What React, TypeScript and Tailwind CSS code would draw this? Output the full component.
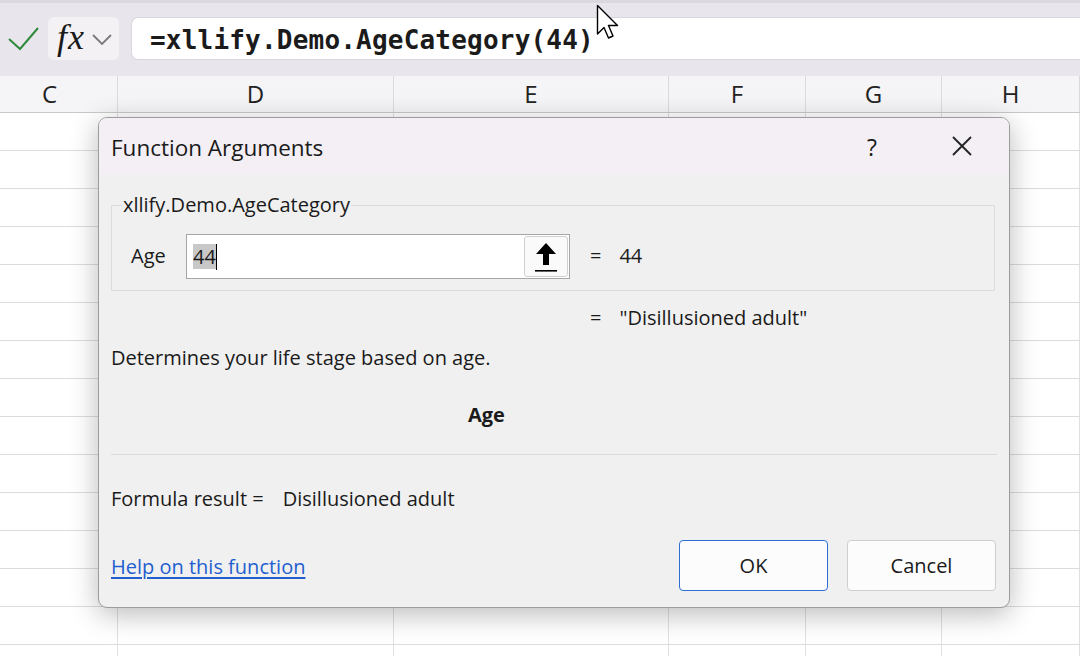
import React from 'react';

const UI_FONT = "font-['Segoe_UI','Open_Sans','Noto_Sans',sans-serif]";

const columns = [
  { key: 'C', width: 118 },
  { key: 'D', width: 276 },
  { key: 'E', width: 275 },
  { key: 'F', width: 137 },
  { key: 'G', width: 136 },
  { key: 'H', width: 138 },
];

const rows = Array.from({ length: 15 }, (_, i) => i);

const FormulaBar: React.FC = () => (
  <div className="h-[76px] bg-[#e9e5ec] border-t-[3px] border-[#dcd8df] pt-[14px]">
    <div className="flex h-[43px] items-stretch">
      <div className="w-[46px] flex items-center justify-center">
        <svg width="34" height="28" viewBox="0 0 34 28">
          <polyline points="3,14 14,24 32,3" fill="none" stroke="#2f8a3c" strokeWidth="2" />
        </svg>
      </div>
      <div className="w-[71px] ml-[2px] rounded-[6px] bg-[#f3f1f4] flex items-center pl-[9px] gap-[6px]">
        <span className="font-['Liberation_Serif',serif] italic text-[36px] leading-none text-[#1a1a1a] -mt-[3px] tracking-[1px]">fx</span>
        <svg width="22" height="14" viewBox="0 0 22 14">
          <polyline points="2,3 11,12 20,3" fill="none" stroke="#7a7a7a" strokeWidth="1.8" />
        </svg>
      </div>
      <div className="flex-1 ml-[12px] bg-white rounded-l-[7px] border border-r-0 border-[#d9d5dc] flex items-center pl-[18px] pt-[3px]">
        <span className="font-['DejaVu_Sans_Mono',monospace] font-bold text-[26px] text-[#1b1b1b] tracking-[0.2px]">
          =xllify.Demo.AgeCategory(44)
        </span>
      </div>
    </div>
  </div>
);

const Grid: React.FC = () => (
  <div className="flex flex-col">
    <div className="flex h-[37px] bg-[#f5f4f6] border-b border-[#c9c9c9]">
      {columns.map((c, i) => (
        <div
          key={c.key}
          style={{ width: c.width }}
          className={`flex items-center justify-center border-r border-[#dadada] text-[24px] text-[#222] ${i === 0 ? 'pr-[18px]' : ''} ${UI_FONT}`}
        >
          {c.key}
        </div>
      ))}
    </div>
    {rows.map((r) => (
      <div key={r} className="flex h-[38px] border-b border-[#dcdcdc] bg-white">
        {columns.map((c) => (
          <div key={c.key} style={{ width: c.width }} className="border-r border-[#e0e0e0]" />
        ))}
      </div>
    ))}
  </div>
);

const FunctionArgumentsDialog: React.FC = () => (
  <div
    className={`absolute left-[98px] top-[117px] w-[912px] h-[491px] rounded-[9px] border border-[#9c9c9c] bg-[#f0f0f0] overflow-hidden shadow-[0_6px_28px_rgba(0,0,0,0.28)] text-[#1a1a1a] ${UI_FONT}`}
  >
    {/* title bar */}
    <div className="h-[56px] bg-[#f3eff5] flex items-center pl-[12px]">
      <span className="text-[22.5px] mt-[3px]">Function Arguments</span>
      <span className="ml-auto text-[23px] mr-[74px] mt-[2px]">?</span>
      <svg width="22" height="22" viewBox="0 0 22 22" className="mr-[36px]">
        <path d="M2 2 L20 20 M20 2 L2 20" stroke="#222" strokeWidth="1.8" />
      </svg>
    </div>

    <div className="px-[12px]">
      {/* argument group */}
      <div className="relative mt-[31px] mr-[2px] h-[86px] border border-[#dcdcdc] pl-[19px] pt-[28px] flex items-start">
        <span className="absolute left-[10px] -top-[14px] bg-[#f0f0f0] px-[1px] text-[20px] leading-[26px]">
          xllify.Demo.AgeCategory
        </span>
        <span className="text-[20px] leading-[44px] w-[55px]">Age</span>
        <div className="w-[384px] h-[45px] bg-white border border-[#a6a6a6] flex items-center">
          <span className="ml-[6px] text-[20px] leading-[25px] bg-[#c8c8c8] text-[#1a1a1a]">44</span>
          <span className="w-[1px] h-[26px] bg-black" />
          <div className="ml-auto mr-[1px] w-[44px] h-[41px] bg-[#fafafa] border border-[#d0d0d0] rounded-[3px] flex items-center justify-center">
            <svg width="24" height="32" viewBox="0 0 24 32">
              <path d="M12 2 L22 13 L15 13 L15 24 L9 24 L9 13 L2 13 Z" fill="#000" />
              <rect x="1" y="29" width="22" height="1.6" fill="#000" />
            </svg>
          </div>
        </div>
        <span className="ml-[20px] text-[20px] leading-[44px]">=</span>
        <span className="ml-[18px] text-[20px] leading-[44px]">44</span>
      </div>

      <div className="flex h-[58px] items-center pl-[479px] text-[20px] -mt-[2px]">
        <span>=</span>
        <span className="ml-[18px]">"Disillusioned adult"</span>
      </div>

      <p className="text-[20px] leading-[38px] -mt-[8px]">Determines your life stage based on age.</p>

      <p className="mt-[19px] pl-[357px] text-[20px] font-bold leading-[38px]">Age</p>

      <div className="mt-[20px] h-[1px] bg-[#dcdcdc]" />

      <p className="mt-[26px] text-[20px] leading-[36px] flex">
        <span>Formula result =</span>
        <span className="ml-[19px]">Disillusioned adult</span>
      </p>

      <div className="mt-[23px] flex items-center">
        <a className="text-[20px] text-[#1f5fcf] underline underline-offset-[3px] mt-[3px]">Help on this function</a>
        <button className="ml-auto w-[149px] h-[51px] bg-[#fcfcfc] border border-[#2c6fd1] rounded-[4px] text-[20px]">
          OK
        </button>
        <button className="ml-[19px] mr-[1px] w-[149px] h-[51px] bg-[#fcfcfc] border border-[#cfcfcf] rounded-[4px] text-[20px]">
          Cancel
        </button>
      </div>
    </div>
  </div>
);

const MouseCursor: React.FC = () => (
  <svg className="absolute left-[596px] top-[4px]" width="28" height="40" viewBox="0 0 28 40">
    <path
      d="M1.5 1.5 L1.5 30 L8 23.5 L12.5 34 L17 32 L12.5 21.5 L21.5 21.5 Z"
      fill="#fff"
      stroke="#000"
      strokeWidth="1.4"
      strokeLinejoin="round"
    />
  </svg>
);

const App: React.FC = () => {
  return (
    <div className="relative w-[1080px] h-[656px] overflow-hidden bg-white">
      <FormulaBar />
      <Grid />
      <FunctionArgumentsDialog />
      <MouseCursor />
    </div>
  );
};

export default App;
